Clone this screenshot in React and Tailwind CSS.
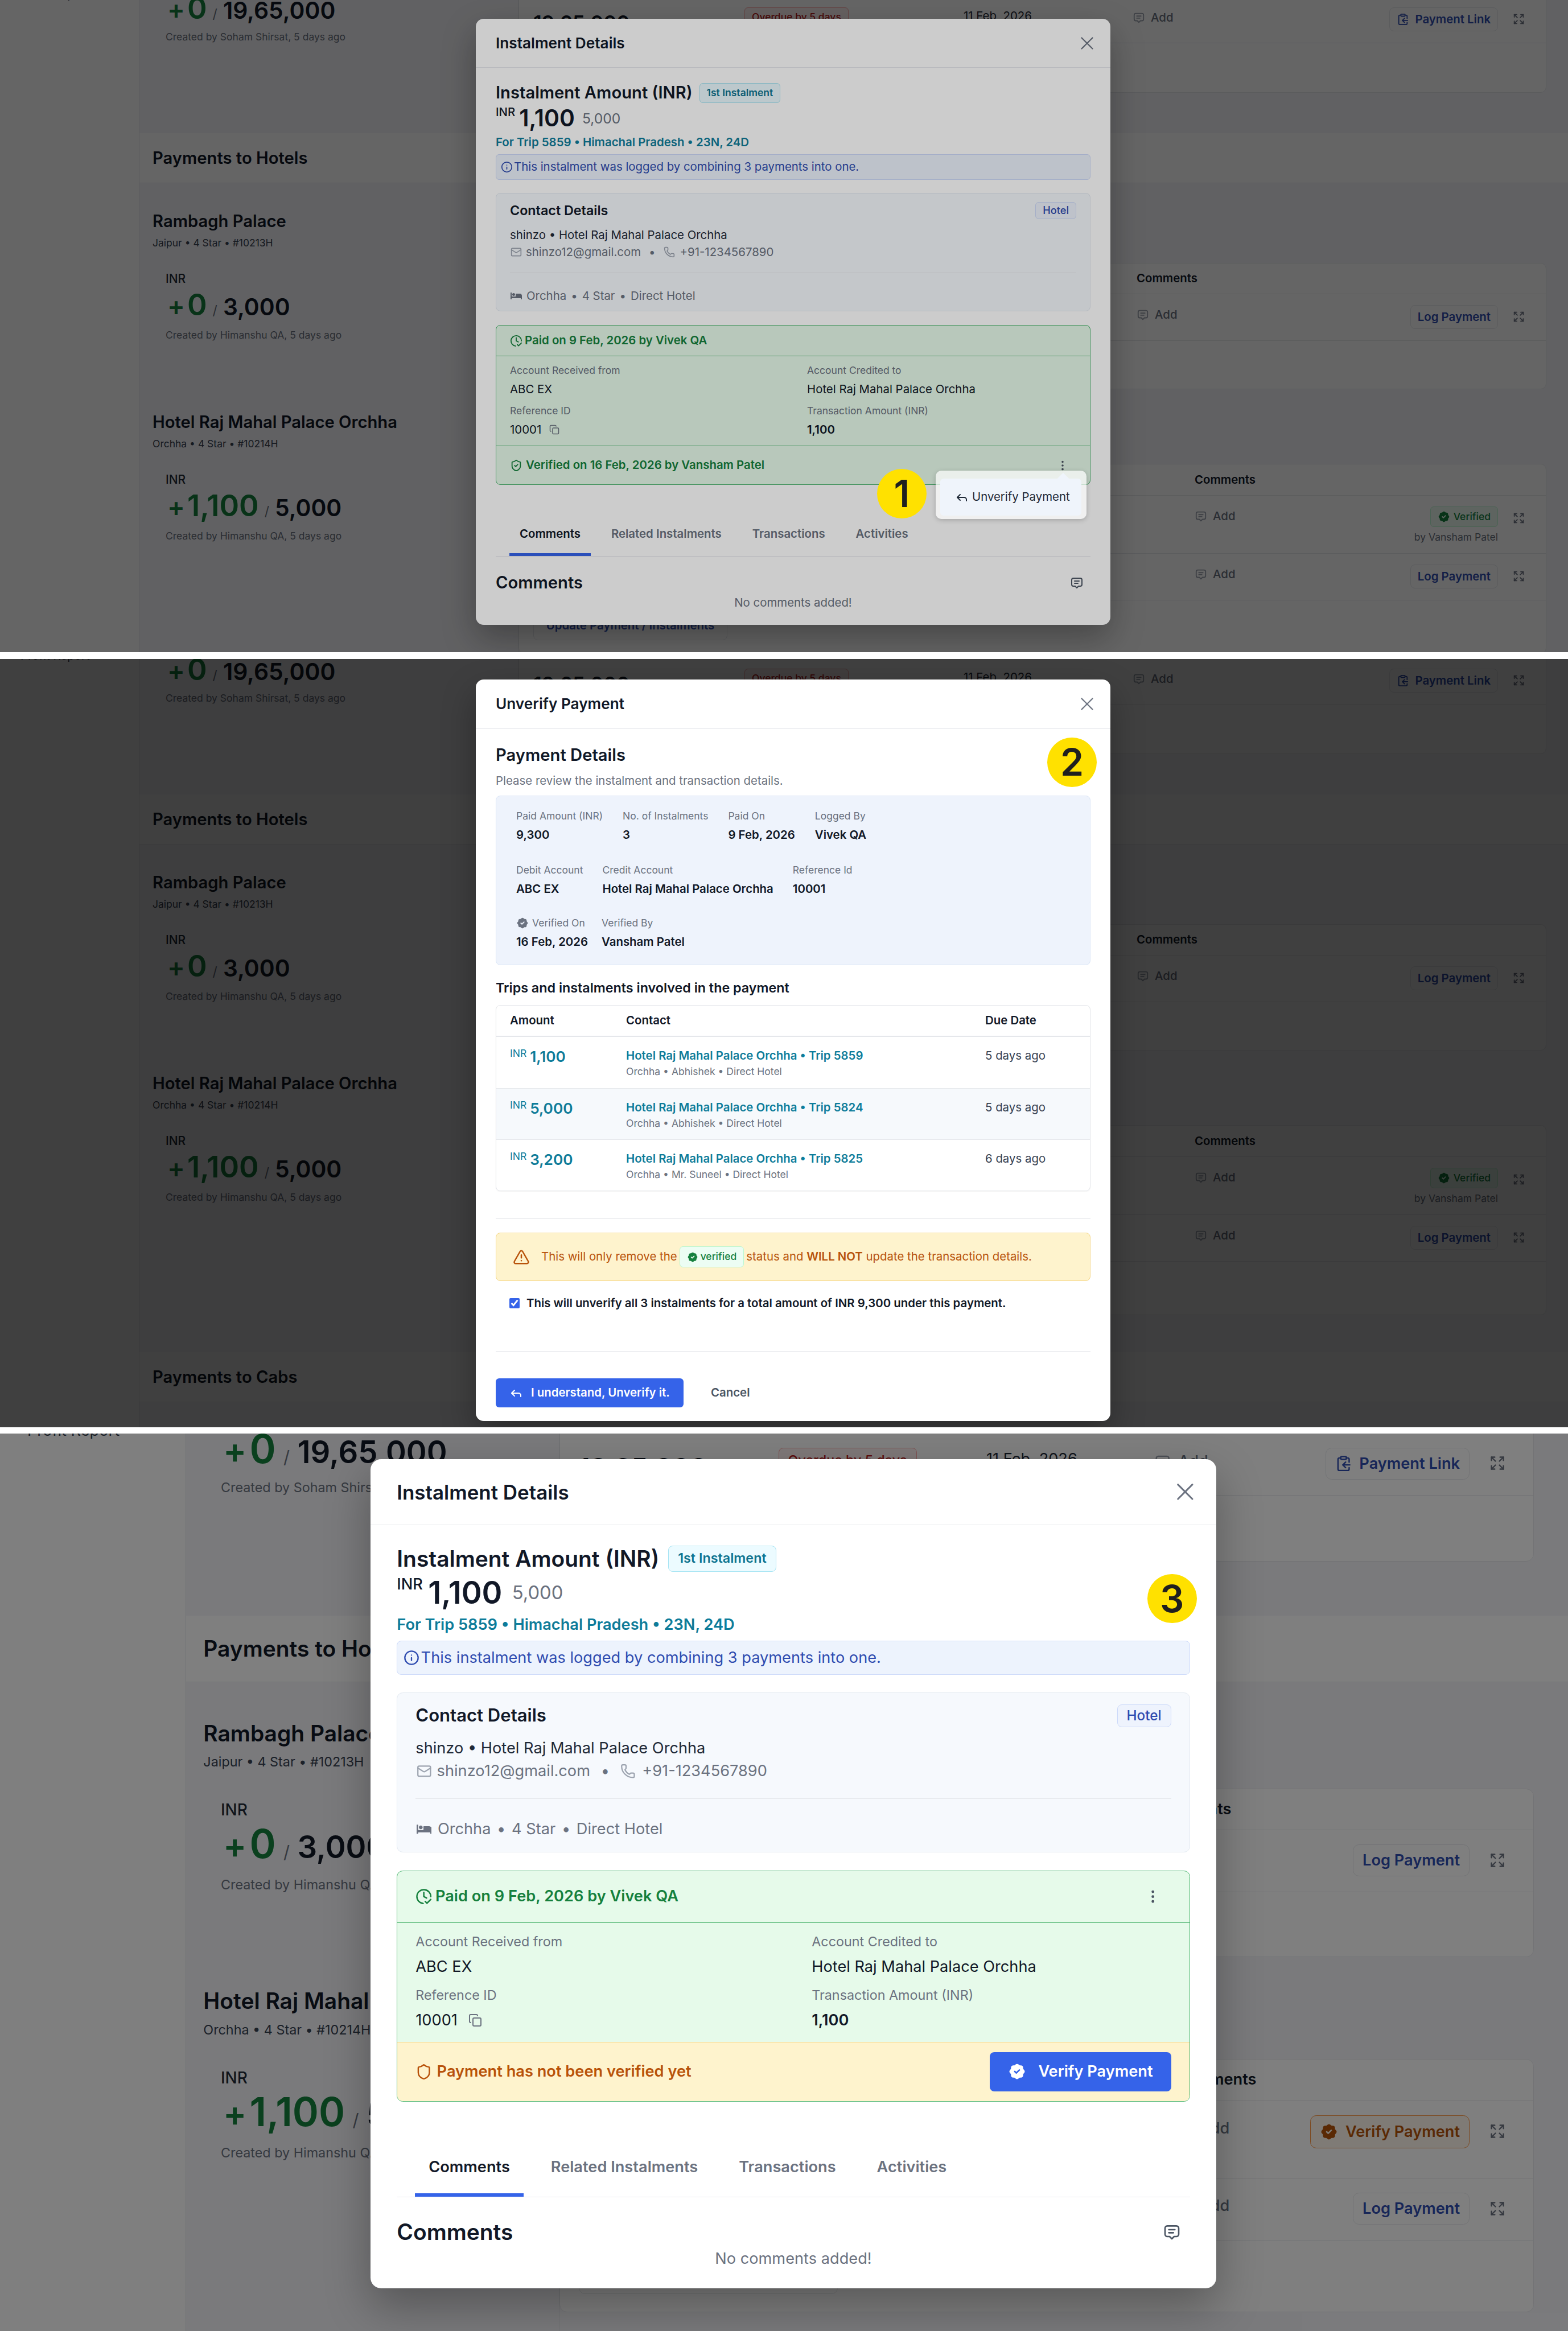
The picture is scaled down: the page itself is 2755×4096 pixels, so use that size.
import { X, Mail, Phone, Info, ClockCheck, Copy, ShieldCheck, Shield, EllipsisVertical, Reply, TriangleAlert, Expand, ClipboardCopy } from 'lucide-react'
import { TbMessage2, TbRosetteDiscountCheckFilled } from 'react-icons/tb'
import { FaBed } from 'react-icons/fa'

const rows = [
  { amount: '1,100', trip: '5859', sub: 'Orchha • Abhishek • Direct Hotel', due: '5 days ago' },
  { amount: '5,000', trip: '5824', sub: 'Orchha • Abhishek • Direct Hotel', due: '5 days ago', tint: true },
  { amount: '3,200', trip: '5825', sub: 'Orchha • Mr. Suneel • Direct Hotel', due: '6 days ago' },
]

function AmountBlock({ paid, total, by, createdClass = 'mt-[12px]' }) {
  return (
    <div className="ml-[23px]">
      <div className="text-[21px] leading-[30px] font-medium text-[#1f2937]">INR</div>
      <div className="flex items-baseline h-[60px] leading-[60px]">
        <span className="ml-[3px] mr-[4px] text-[46px] font-semibold text-[#15803d]">+</span>
        <span className="text-[52.5px] font-semibold text-[#15803d]">{paid}</span>
        <span className="text-[23px] text-[#6b7280] mx-[10px]">/</span>
        <span className="text-[40.8px] font-semibold text-[#111827]">{total}</span>
      </div>
      <div className={`text-[17.5px] leading-[24px] text-[#6b7280] ${createdClass}`}>Created by {by}, 5 days ago</div>
    </div>
  )
}

function HotelBlock({ name, sub, children, className }) {
  return (
    <div className={className}>
      <h3 className="text-[29.2px] leading-[36px] font-semibold text-[#111827]">{name}</h3>
      <p className="mt-[8px] text-[17.5px] leading-[24px] text-[#374151]">{sub}</p>
      <div className="mt-[36px]">{children}</div>
    </div>
  )
}

function AddComment({ className }) {
  return (
    <div className={`flex items-center gap-[10px] text-[20.4px] font-medium text-[#6b7280] ${className}`}>
      <TbMessage2 className="w-[22px] h-[22px] text-[#9ca3af]" />
      Add
    </div>
  )
}

function OutlineButton({ children }) {
  return (
    <div className="flex items-center gap-[10px] h-[42px] px-[12px] rounded-[8px] border border-[#e5e7eb] text-[20.4px] font-semibold text-[#2f4cb0]">
      {children}
    </div>
  )
}

function CardRow({ spacer, height, children }) {
  return (
    <div className={`flex items-start pt-[19px] pr-[37px] border-b border-[#e5e7eb] ${height}`}>
      <div className={`shrink-0 ${spacer}`} />
      <AddComment className="mt-[2px]" />
      <div className="ml-auto flex flex-col items-end">{children}</div>
      <Expand className="ml-[26px] mt-[10px] w-[21px] h-[21px] text-[#6b7280]" strokeWidth={2} />
    </div>
  )
}

function Band({ title }) {
  return (
    <div className="flex items-center h-[88px] pl-[23px] bg-white border-b border-[#e5e7eb]">
      <h2 className="text-[29.2px] font-semibold text-[#111827]">{title}</h2>
    </div>
  )
}

function PageBackground({ leftCol, rightGap, amountCol, statusCol, dateCol, spacerA, spacerB, cardGap, unverified }) {
  return (
    <div className="flex font-['Inter',sans-serif] bg-[#f5f5f9]">
      <aside className="w-[245px] shrink-0 bg-white border-r border-[#e5e7eb] pt-[38px] pl-[36px] text-[20.4px] leading-[24px] text-[#374151]">
        Profit Report
      </aside>
      <main className="flex-1 min-w-0">
        <div className="flex h-[294px]">
          <div className={`shrink-0 pl-[23px] pt-[14px] border-r border-[#e5e7eb] ${leftCol}`}>
            <AmountBlock paid="0" total="19,65,000" by="Soham Shirsat" createdClass="mt-[9px]" />
          </div>
          <div className={`flex-1 min-w-0 ${rightGap}`}>
            <div className="h-[223px] bg-white rounded-b-[10px] border border-[#e5e7eb] pt-[72px]">
              <div className="flex items-start pr-[37px] h-[63px] border-b border-[#e5e7eb]">
                <div className={`shrink-0 pl-[25px] pt-[7px] text-[35px] leading-[40px] font-semibold text-[#111827] ${amountCol}`}>19,65,000</div>
                <div className={`shrink-0 ${statusCol}`}>
                  <span className="inline-block h-[33px] leading-[31px] px-[12px] rounded-[6px] border border-[#fca5a5] bg-[#fef2f2] text-[17.5px] font-medium text-[#b91c1c]">Overdue by 5 days</span>
                </div>
                <div className={`shrink-0 text-[20.4px] leading-[30px] text-[#1f2937] ${dateCol}`}>11 Feb, 2026</div>
                <AddComment className="mt-[3px]" />
                <div className="ml-auto">
                  <OutlineButton><ClipboardCopy className="w-[22px] h-[22px]" />Payment Link</OutlineButton>
                </div>
                <Expand className="ml-[26px] mt-[10px] w-[21px] h-[21px] text-[#6b7280]" strokeWidth={2} />
              </div>
            </div>
          </div>
        </div>
        <Band title="Payments to Hotels" />
        <div className="flex">
          <div className={`shrink-0 pl-[23px] pt-[49px] border-r border-[#e5e7eb] ${leftCol}`}>
            <HotelBlock name="Rambagh Palace" sub="Jaipur • 4 Star • #10213H">
              <AmountBlock paid="0" total="3,000" by="Himanshu QA" />
            </HotelBlock>
            <HotelBlock name="Hotel Raj Mahal Palace Orchha" sub="Orchha • 4 Star • #10214H" className="mt-[123px]">
              <AmountBlock paid="1,100" total="5,000" by="Himanshu QA" />
            </HotelBlock>
          </div>
          <div className={`flex-1 min-w-0 pt-[140px] pb-[65px] ${rightGap}`}>
            <div className="h-[222px] bg-white rounded-[10px] border border-[#e5e7eb]">
              <div className="flex items-center h-[54px] border-b border-[#e5e7eb]">
                <div className={`shrink-0 ${spacerA}`} />
                <span className="text-[20.4px] font-semibold text-[#111827]">Comments</span>
              </div>
              <CardRow spacer={spacerA} height="h-[82px]">
                <OutlineButton>Log Payment</OutlineButton>
              </CardRow>
            </div>
            <div className={`h-[334px] bg-white rounded-[10px] border border-[#e5e7eb] ${cardGap}`}>
              <div className="flex items-center h-[55px] border-b border-[#e5e7eb]">
                <div className={`shrink-0 ${spacerB}`} />
                <span className="text-[20.4px] font-semibold text-[#111827]">Comments</span>
              </div>
              <CardRow spacer={spacerB} height="h-[102px]">
                {unverified ? (
                  <div className="flex items-center gap-[10px] h-[43px] px-[12px] rounded-[8px] border border-[#fb923c] bg-[#fff7ed] text-[20.4px] font-semibold text-[#b45309]">
                    <TbRosetteDiscountCheckFilled className="w-[24px] h-[24px]" />
                    Verify Payment
                  </div>
                ) : (
                  <>
                    <div className="flex items-center gap-[6px] h-[36px] px-[12px] rounded-[6px] border border-[#bbf7d0] bg-[#ecfdf3] text-[17.5px] font-medium text-[#15803d]">
                      <TbRosetteDiscountCheckFilled className="w-[22px] h-[22px]" />
                      Verified
                    </div>
                    <div className="mt-[6px] text-[17.5px] leading-[24px] text-[#6b7280]">by Vansham Patel</div>
                  </>
                )}
              </CardRow>
              <CardRow spacer={spacerB} height="h-[82px]">
                <OutlineButton>Log Payment</OutlineButton>
              </CardRow>
              <div className="ml-[25px] mt-[18px] flex items-center justify-center w-[341px] h-[52px] rounded-[8px] border border-[#e5e7eb] text-[20.4px] font-semibold text-[#2f4cb0]">
                Update Payment / Instalments
              </div>
            </div>
          </div>
        </div>
        <Band title="Payments to Cabs" />
        <div className="h-[300px]" />
      </main>
    </div>
  )
}

function ModalHeader({ title, height }) {
  return (
    <div className={`flex items-center justify-between pl-[35px] pr-[22px] border-b border-[#e5e7eb] ${height}`}>
      <h2 className="text-[26.2px] font-semibold text-[#111827]">{title}</h2>
      <X className="w-[38px] h-[38px] text-[#6b7280]" strokeWidth={1.4} />
    </div>
  )
}

function Field({ label, value, strong, children }) {
  return (
    <div>
      <div className="text-[17.5px] leading-[24px] text-[#6b7280]">{label}</div>
      <div className={`mt-[9px] flex items-center gap-[14px] text-[20.4px] leading-[24px] text-[#111827] ${strong ? 'font-semibold' : ''}`}>
        {value}
        {children}
      </div>
    </div>
  )
}

function InstalmentModal({ className, verified, headerHeight, contactHeight, paidHeight }) {
  return (
    <div className={`absolute w-[1115px] rounded-[14px] bg-white shadow-[0_24px_60px_rgba(0,0,0,0.3)] font-['Inter',sans-serif] ${className}`}>
      <ModalHeader title="Instalment Details" height={headerHeight} />
      <div className="px-[35px] pt-[26px]">
        <div className="flex items-center gap-[12px] h-[36px]">
          <h3 className="text-[29.2px] font-semibold text-[#111827]">Instalment Amount (INR)</h3>
          <span className="flex items-center h-[35px] px-[12px] rounded-[6px] border border-[#a5e4f3] bg-[#ecfbff] text-[17.5px] font-semibold text-[#0e7490]">1st Instalment</span>
        </div>
        <div className="flex items-center h-[54px]">
          <span className="self-start mt-[4px] text-[20.4px] leading-[24px] font-medium text-[#111827]">INR</span>
          <span className="ml-[7px] text-[40.8px] font-semibold text-[#111827]">1,100</span>
          <span className="ml-[13px] text-[24.6px] text-[#6b7280]">5,000</span>
        </div>
        <div className="h-[30px] leading-[30px] text-[20.4px] font-semibold text-[#0e7c9a]">For Trip 5859 • Himachal Pradesh • 23N, 24D</div>
        <div className="mt-[6px] flex items-center gap-[2px] h-[45px] px-[8px] rounded-[6px] border border-[#cddafa] bg-[#edf3fd] text-[20.4px] text-[#2f4cb0]">
          <Info className="w-[21px] h-[21px]" />
          This instalment was logged by combining 3 payments into one.
        </div>
        <div className={`mt-[23px] relative px-[24px] pt-[14px] rounded-[8px] border border-[#e2e8f0] bg-[#f6f9fd] ${contactHeight}`}>
          <div className="flex items-center justify-between h-[32px]">
            <h4 className="text-[23.3px] font-semibold text-[#111827]">Contact Details</h4>
            <span className="flex items-center h-[30px] px-[12px] rounded-[6px] border border-[#cddafa] bg-[#eef3fd] text-[18.2px] font-medium text-[#2f4cb0]">Hotel</span>
          </div>
          <div className="mt-[13px] text-[20.4px] leading-[28px] text-[#1f2937]">shinzo • Hotel Raj Mahal Palace Orchha</div>
          <div className="mt-[2px] flex items-center text-[20.4px] leading-[28px] text-[#6b7280]">
            <Mail className="ml-[1px] w-[20px] h-[20px] text-[#9ca3af] mr-[7px]" />
            shinzo12@gmail.com
            <span className="mx-[14px]">•</span>
            <Phone className="w-[20px] h-[20px] text-[#9ca3af] mr-[9px]" />
            +91-1234567890
          </div>
          <div className="mt-[22px] border-t border-[#e5e7eb]" />
          <div className="mt-[26px] flex items-center text-[20.4px] leading-[28px] text-[#6b7280]">
            <FaBed className="ml-[1px] w-[20px] h-[20px] mr-[8px]" />
            Orchha<span className="mx-[8px]">•</span>4 Star<span className="mx-[8px]">•</span>Direct Hotel
          </div>
        </div>
        <div className="mt-[24px] rounded-[8px] border border-[#4cb56f] bg-[#e6faea] overflow-hidden">
          <div className={`flex items-center gap-[4px] px-[24px] border-b border-[#4cb56f] text-[20.4px] font-semibold text-[#15803d] ${paidHeight}`}>
            <ClockCheck className="w-[22px] h-[22px]" />
            Paid on 9 Feb, 2026 by Vivek QA
            {!verified && <EllipsisVertical className="ml-auto mr-[13px] w-[22px] h-[22px] text-[#4b5563]" />}
          </div>
          <div className="grid grid-cols-[522px_1fr] content-start px-[24px] pt-[13px] gap-y-[14px] h-[157px]">
            <Field label="Account Received from" value="ABC EX" />
            <Field label="Account Credited to" value="Hotel Raj Mahal Palace Orchha" />
            <Field label="Reference ID" value="10001"><Copy className="w-[18px] h-[18px] text-[#6b7280]" /></Field>
            <Field label="Transaction Amount (INR)" value="1,100" strong />
          </div>
          {verified ? (
            <div className="flex items-center gap-[6px] h-[68px] px-[24px] border-t border-[#4cb56f] text-[20.4px] font-semibold text-[#15803d]">
              <ShieldCheck className="w-[22px] h-[22px]" />
              Verified on 16 Feb, 2026 by Vansham Patel
              <EllipsisVertical className="ml-auto mr-[13px] w-[22px] h-[22px] text-[#4b5563]" />
            </div>
          ) : (
            <div className="flex items-center gap-[6px] h-[78px] px-[24px] border-t border-[#f5d88a] bg-[#fef3cd] text-[20.4px] font-semibold text-[#b8520a]">
              <Shield className="w-[22px] h-[22px]" />
              Payment has not been verified yet
              <div className="ml-auto flex items-center justify-center gap-[16px] w-[239px] h-[52px] rounded-[6px] bg-[#3563e9] text-white">
                <TbRosetteDiscountCheckFilled className="w-[24px] h-[24px]" />
                Verify Payment
              </div>
            </div>
          )}
        </div>
        <div className="flex items-end gap-[18px] h-[126px] px-[24px] border-b border-[#e5e7eb] text-[20.4px] font-semibold text-[#6b7280]">
          <div className="h-[70px] pt-[16px] px-[18px] border-b-[5px] border-[#3563e9] text-[#111827]">Comments</div>
          <div className="h-[70px] pt-[16px] px-[18px]">Related Instalments</div>
          <div className="h-[70px] pt-[16px] px-[18px]">Transactions</div>
          <div className="h-[70px] pt-[16px] px-[18px]">Activities</div>
        </div>
        <div className="mt-[26px] flex items-center justify-between h-[40px] pr-[12px]">
          <h3 className="text-[29.2px] font-semibold text-[#111827]">Comments</h3>
          <TbMessage2 className="w-[24px] h-[24px] text-[#4b5563]" />
        </div>
        <div className="mt-[1px] pb-[25px] text-center text-[20.4px] leading-[28px] text-[#6b7280]">No comments added!</div>
      </div>
    </div>
  )
}

function Summary({ label, value, icon }) {
  return (
    <div>
      <div className="flex items-center gap-[6px] h-[24px] text-[17.5px] text-[#6b7280]">
        {icon}
        {label}
      </div>
      <div className="mt-[9px] text-[20.4px] leading-[24px] font-semibold text-[#111827]">{value}</div>
    </div>
  )
}

function UnverifyModal() {
  return (
    <div className="absolute left-[836px] top-[36px] w-[1115px] h-[1303px] rounded-[14px] bg-white shadow-[0_24px_60px_rgba(0,0,0,0.3)] font-['Inter',sans-serif]">
      <ModalHeader title="Unverify Payment" height="h-[87px]" />
      <div className="px-[35px]">
        <h3 className="mt-[28px] text-[29.2px] leading-[36px] font-semibold text-[#111827]">Payment Details</h3>
        <p className="mt-[13px] text-[20.4px] leading-[28px] text-[#6b7280]">Please review the instalment and transaction details.</p>
        <div className="mt-[12px] h-[298px] rounded-[8px] border border-[#dbe6f7] bg-[#eef3fc] pl-[35px] pt-[23px]">
          <div className="flex gap-x-[35px]">
            <Summary label="Paid Amount (INR)" value="9,300" />
            <Summary label="No. of Instalments" value="3" />
            <Summary label="Paid On" value="9 Feb, 2026" />
            <Summary label="Logged By" value="Vivek QA" />
          </div>
          <div className="mt-[38px] flex gap-x-[34px]">
            <Summary label="Debit Account" value="ABC EX" />
            <Summary label="Credit Account" value="Hotel Raj Mahal Palace Orchha" />
            <Summary label="Reference Id" value="10001" />
          </div>
          <div className="mt-[36px] flex gap-x-[24px]">
            <Summary label="Verified On" value="16 Feb, 2026" icon={<TbRosetteDiscountCheckFilled className="w-[22px] h-[22px] text-[#6b7280]" />} />
            <Summary label="Verified By" value="Vansham Patel" />
          </div>
        </div>
        <h4 className="mt-[25px] text-[23.3px] leading-[30px] font-semibold text-[#111827]">Trips and instalments involved in the payment</h4>
        <div className="mt-[15px] rounded-[8px] border border-[#e5e7eb] shadow-[0_1px_2px_rgba(0,0,0,0.06)] overflow-hidden">
          <div className="grid grid-cols-[204px_631px_1fr] items-center h-[55px] px-[24px] border-b-2 border-[#e5e7eb] text-[20.4px] font-semibold text-[#111827]">
            <div>Amount</div>
            <div>Contact</div>
            <div>Due Date</div>
          </div>
          {rows.map((row, i) => (
            <div key={row.trip} className={`grid grid-cols-[204px_631px_1fr] h-[90px] px-[24px] pt-[19px] ${i > 0 ? 'border-t border-[#e5e7eb]' : ''} ${row.tint ? 'bg-[#f6f9fc]' : ''}`}>
              <div className="flex items-start">
                <span className="text-[17.5px] leading-[20px] text-[#0e7c9a]">INR</span>
                <span className="ml-[6px] mt-[2px] text-[26.2px] leading-[28px] font-semibold text-[#0e7c9a]">{row.amount}</span>
              </div>
              <div>
                <div className="text-[20.4px] leading-[28px] font-semibold text-[#0e7c9a]">Hotel Raj Mahal Palace Orchha • Trip {row.trip}</div>
                <div className="text-[17.5px] leading-[28px] text-[#6b7280]">{row.sub}</div>
              </div>
              <div className="text-[20.4px] leading-[28px] text-[#374151]">{row.due}</div>
            </div>
          ))}
        </div>
        <div className="mt-[48px] border-t border-[#e5e7eb]" />
        <div className="mt-[24px] flex items-center h-[85px] pl-[29px] rounded-[8px] border border-[#f5d88a] bg-[#fef3cd] text-[20.4px] text-[#b8520a]">
          <TriangleAlert className="w-[30px] h-[30px] mr-[20px]" />
          This will only remove the
          <span className="mx-[4px] flex items-center gap-[4px] h-[37px] px-[12px] rounded-[6px] border border-[#bbf7d0] bg-[#ecfdf3] text-[17.5px] font-medium text-[#15803d]">
            <TbRosetteDiscountCheckFilled className="w-[20px] h-[20px]" />
            verified
          </span>
          status and&nbsp;<b className="font-semibold">WILL NOT</b>&nbsp;update the transaction details.
        </div>
        <label className="mt-[25px] ml-[24px] flex items-center gap-[12px] h-[28px] text-[20.4px] font-semibold text-[#111827]">
          <input type="checkbox" checked readOnly className="w-[18px] h-[18px] accent-[#3563e9]" />
          This will unverify all 3 instalments for a total amount of INR 9,300 under this payment.
        </label>
        <div className="mt-[70px] border-t border-[#e5e7eb]" />
        <div className="mt-[47px] flex items-center">
          <div className="flex items-center gap-[14px] w-[330px] h-[51px] pl-[24px] rounded-[6px] bg-[#3563e9] text-[20.4px] font-semibold text-white">
            <Reply className="w-[24px] h-[24px]" />
            I understand, Unverify it.
          </div>
          <span className="ml-[48px] text-[20.4px] font-semibold text-[#4b5563]">Cancel</span>
        </div>
      </div>
    </div>
  )
}

function StepBadge({ number, className }) {
  return (
    <div className={`absolute flex items-center justify-center rounded-full bg-[#ffe100] font-['Inter',sans-serif] font-semibold text-[#1f1f1f] ${className}`}>
      {number}
    </div>
  )
}

export default function App() {
  return (
    <div className="w-[2755px] bg-white">
      <section className="relative h-[1146px] overflow-hidden">
        <div className="-mt-[60px]">
          <PageBackground leftCol="w-[666px]" rightGap="mr-[38px]" amountCol="w-[396px]" statusCol="w-[385px]" dateCol="w-[297px]" spacerA="w-[1085px]" spacerB="w-[1187px]" cardGap="mt-[131px]" />
        </div>
        <div className="absolute inset-0 bg-black/50" />
        <InstalmentModal className="left-[836px] top-[33px]" verified headerHeight="h-[86px]" contactHeight="h-[208px]" paidHeight="h-[54px]" />
        <div className="absolute inset-0 bg-black/20" />
        <div className="absolute left-[1644px] top-[827px] w-[265px] h-[85px] rounded-[10px] bg-white/70 shadow-[0_2px_8px_rgba(0,0,0,0.2)]" />
        <div className="absolute left-[1860px] top-[834px] w-[16px] h-[16px] rotate-45 bg-[#eff4fb]" />
        <div className="absolute left-[1652px] top-[841px] flex items-center gap-[6px] w-[248px] h-[65px] pl-[26px] rounded-[6px] bg-[#eff4fb] text-[20.4px] text-[#1f2937] font-['Inter',sans-serif]">
          <Reply className="w-[24px] h-[24px]" />
          Unverify Payment
        </div>
        <StepBadge number="1" className="left-[1541px] top-[824px] w-[87px] h-[87px] text-[66px]" />
      </section>

      <section className="relative h-[1350px] mt-[12px] overflow-hidden">
        <div className="-mt-[56px]">
          <PageBackground leftCol="w-[666px]" rightGap="mr-[38px]" amountCol="w-[396px]" statusCol="w-[385px]" dateCol="w-[297px]" spacerA="w-[1085px]" spacerB="w-[1187px]" cardGap="mt-[131px]" />
        </div>
        <div className="absolute inset-0 bg-black/75" />
        <UnverifyModal />
        <StepBadge number="2" className="left-[1840px] top-[138px] w-[87px] h-[87px] text-[66px]" />
      </section>

      <section className="h-[1577px] mt-[11px] overflow-hidden">
        <div className="relative h-[1183px] overflow-hidden [zoom:1.3333]">
          <div className="-mt-[54px]">
            <PageBackground leftCol="w-[492px]" rightGap="mr-[45px]" amountCol="w-[288px]" statusCol="w-[274px]" dateCol="w-[221px]" spacerA="w-[778px]" spacerB="w-[811px]" cardGap="mt-[134px]" unverified />
          </div>
          <div className="absolute inset-0 bg-black/50" />
          <InstalmentModal className="left-[488px] top-[34px]" headerHeight="h-[87px]" contactHeight="h-[211px]" paidHeight="h-[68px]" />
          <StepBadge number="3" className="left-[1512px] top-[185px] w-[65px] h-[65px] text-[50px]" />
        </div>
      </section>
    </div>
  )
}
